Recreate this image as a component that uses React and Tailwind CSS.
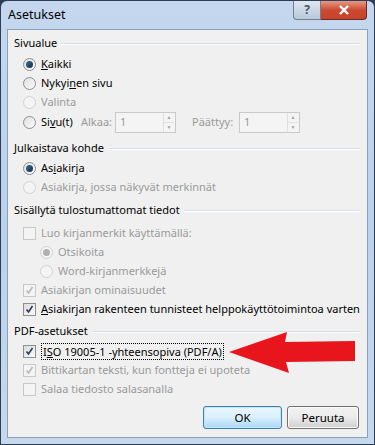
import React from 'react';

const Radio = ({ checked, disabled }) => (
    <span className={`w-[13px] h-[13px] rounded-full border flex items-center justify-center shrink-0 ${disabled ? 'border-[#d2d2d2] bg-[#f4f4f4]' : 'border-[#8e8f8f] bg-gradient-to-br from-[#e0e0e0] to-[#fbfbfb]'}`}>
        {checked && <span className={`w-[7px] h-[7px] rounded-full ${disabled ? 'bg-[#b0b0b0]' : 'bg-gradient-to-br from-[#3a6f98] to-[#152b44]'}`} />}
    </span>
);

const Check = ({ checked, disabled }) => (
    <span className={`w-[13px] h-[13px] border flex items-center justify-center shrink-0 ${disabled ? 'border-[#c8c8c8] bg-[#f4f4f4]' : 'border-[#8e8f8f] bg-gradient-to-br from-[#dcdcdc] to-[#fafafa]'}`}>
        {checked && (
            <svg width="9" height="9" viewBox="0 0 9 9">
                <path d="M1.5 4.5 L3.5 7 L7.5 1" fill="none" stroke={disabled ? '#b8b8b8' : '#2a3a5a'} strokeWidth="1.6" />
            </svg>
        )}
    </span>
);

const Header = ({ text, className = '' }) => (
    <div className={`h-[19px] flex items-center pl-[6px] pr-[7px] ${className}`}>
        <span className="mr-[4px]">{text}</span>
        <span className="flex-1 h-[2px] border-t border-[#d5dfe5] border-b border-b-white" />
    </div>
);

const Row = ({ children, indent = 'pl-[15px]', className = '' }) => (
    <div className={`h-[19px] flex items-center gap-[5px] whitespace-nowrap ${indent} ${className}`}>{children}</div>
);

const Spin = () => (
    <span className="w-[61px] h-[21px] shrink-0 border border-[#c9c9c9] bg-[#f4f4f4] flex items-center">
        <span className="flex-1 pl-[4px] text-[#9a9a9a]">1</span>
        <span className="w-[11px] h-[19px] mr-[1px] flex flex-col border-l border-[#e0e0e0]">
            <span className="flex-1 flex items-center justify-center border-b border-[#e0e0e0] text-[5px] text-[#a0a0a0] leading-none">▲</span>
            <span className="flex-1 flex items-center justify-center text-[5px] text-[#a0a0a0] leading-none">▼</span>
        </span>
    </span>
);

const u = (s) => <span className="underline">{s}</span>;

export default function App() {
    return (
        <div className="w-[375px] h-[445px] relative bg-[#2c3e55] p-px overflow-hidden" style={{ fontFamily: '"Noto Sans", sans-serif' }}>
            <div className="w-full h-full bg-gradient-to-b from-[#c4d7ee] via-[#bcd1ea] to-[#c6d8ec] rounded-t-[6px] flex flex-col">
                <div className="h-[28px] relative flex items-center pl-[7px] text-[12.5px] text-black">
                    Asetukset
                    <div className="absolute top-0 right-[7px] flex">
                        <div className="w-[28px] h-[19px] border border-[#6f7f94] border-t-0 rounded-bl-[4px] bg-gradient-to-b from-[#dfe7f1] to-[#b9c8da] flex items-center justify-center text-[12px] text-[#4a5568] font-bold">?</div>
                        <div className="w-[46px] h-[19px] border border-[#6b2a20] border-t-0 border-l-0 rounded-br-[4px] bg-gradient-to-b from-[#e29a86] via-[#cc4a30] to-[#c7432a] flex items-center justify-center">
                            <svg width="12" height="10" viewBox="0 0 12 10">
                                <path d="M2 1 L10 9 M10 1 L2 9" stroke="white" strokeWidth="2.4" />
                            </svg>
                        </div>
                    </div>
                </div>
                <div className="flex-1 mx-[6px] mb-[6px] border border-[#8aa0bb] bg-[#f0f0f0] text-[11px] text-black relative">
                    <div className="pt-[4px]">
                        <Header text="Sivualue" />
                        <Row className="mt-[2px]"><Radio checked /><span>{u('K')}aikki</span></Row>
                        <Row><Radio /><span>Nykyi{u('n')}en sivu</span></Row>
                        <Row><Radio disabled /><span className="text-[#9a9a9a]">Valinta</span></Row>
                        <div className="h-[21px] flex items-center pl-[15px] whitespace-nowrap">
                            <Radio />
                            <span className="ml-[5px] w-[40px] shrink-0">Si{u('v')}u(t)</span>
                            <span className="w-[34px] shrink-0 text-[#9a9a9a]">Alkaa:</span>
                            <Spin />
                            <span className="ml-[16px] w-[47px] shrink-0 text-[#9a9a9a]">Päättyy:</span>
                            <Spin />
                        </div>
                        <Header text="Julkaistava kohde" className="mt-[6px]" />
                        <Row className="mt-[1px]"><Radio checked /><span>As{u('i')}akirja</span></Row>
                        <Row><Radio disabled /><span className="text-[#9a9a9a]">Asiakirja, jossa näkyvät merkinnät</span></Row>
                        <Header text="Sisällytä tulostumattomat tiedot" className="mt-[4px]" />
                        <Row className="mt-[4px]"><Check disabled /><span className="text-[#9a9a9a]">Luo kirjanmerkit käyttämällä:</span></Row>
                        <Row indent="pl-[32px]"><Radio checked disabled /><span className="text-[#9a9a9a]">Otsikoita</span></Row>
                        <Row indent="pl-[32px]"><Radio disabled /><span className="text-[#9a9a9a]">Word-kirjanmerkkejä</span></Row>
                        <Row><Check checked disabled /><span className="text-[#9a9a9a]">Asiakirjan ominaisuudet</span></Row>
                        <Row><Check checked /><span>{u('A')}siakirjan rakenteen tunnisteet helppokäyttötoimintoa varten</span></Row>
                        <Header text="PDF-asetukset" className="mt-[3px]" />
                        <Row className="mt-[1px]"><Check checked /><span className="border border-dotted border-black px-[1px] leading-[15px]">I{u('S')}O 19005-1 -yhteensopiva (PDF/A)</span></Row>
                        <Row><Check checked disabled /><span className="text-[#9a9a9a]">Bittikartan teksti, kun fontteja ei upoteta</span></Row>
                        <Row><Check disabled /><span className="text-[#9a9a9a]">Salaa tiedosto salasanalla</span></Row>
                        <div className="flex justify-end gap-[5px] pr-[8px] mt-[7px] text-[11.5px]">
                            <button className="w-[79px] h-[23px] rounded-[3px] border border-[#3c7fb1] bg-gradient-to-b from-[#eaf6fd] via-[#d9f0fc] to-[#a7d9f5] shadow-[inset_0_0_0_1px_#c5e6f9]">OK</button>
                            <button className="w-[72px] h-[23px] rounded-[3px] border border-[#707070] bg-gradient-to-b from-[#f2f2f2] via-[#ebebeb] to-[#cfcfcf] shadow-[inset_0_0_0_1px_#fcfcfc]">Peruuta</button>
                        </div>
                    </div>
                    <svg className="absolute left-[221px] top-[302px]" width="128" height="42" viewBox="0 0 128 42">
                        <polygon points="0,20 58,0 56,10 126,9 126,29 57,30 60,41" fill="#e8151d" />
                    </svg>
                </div>
            </div>
        </div>
    );
}
